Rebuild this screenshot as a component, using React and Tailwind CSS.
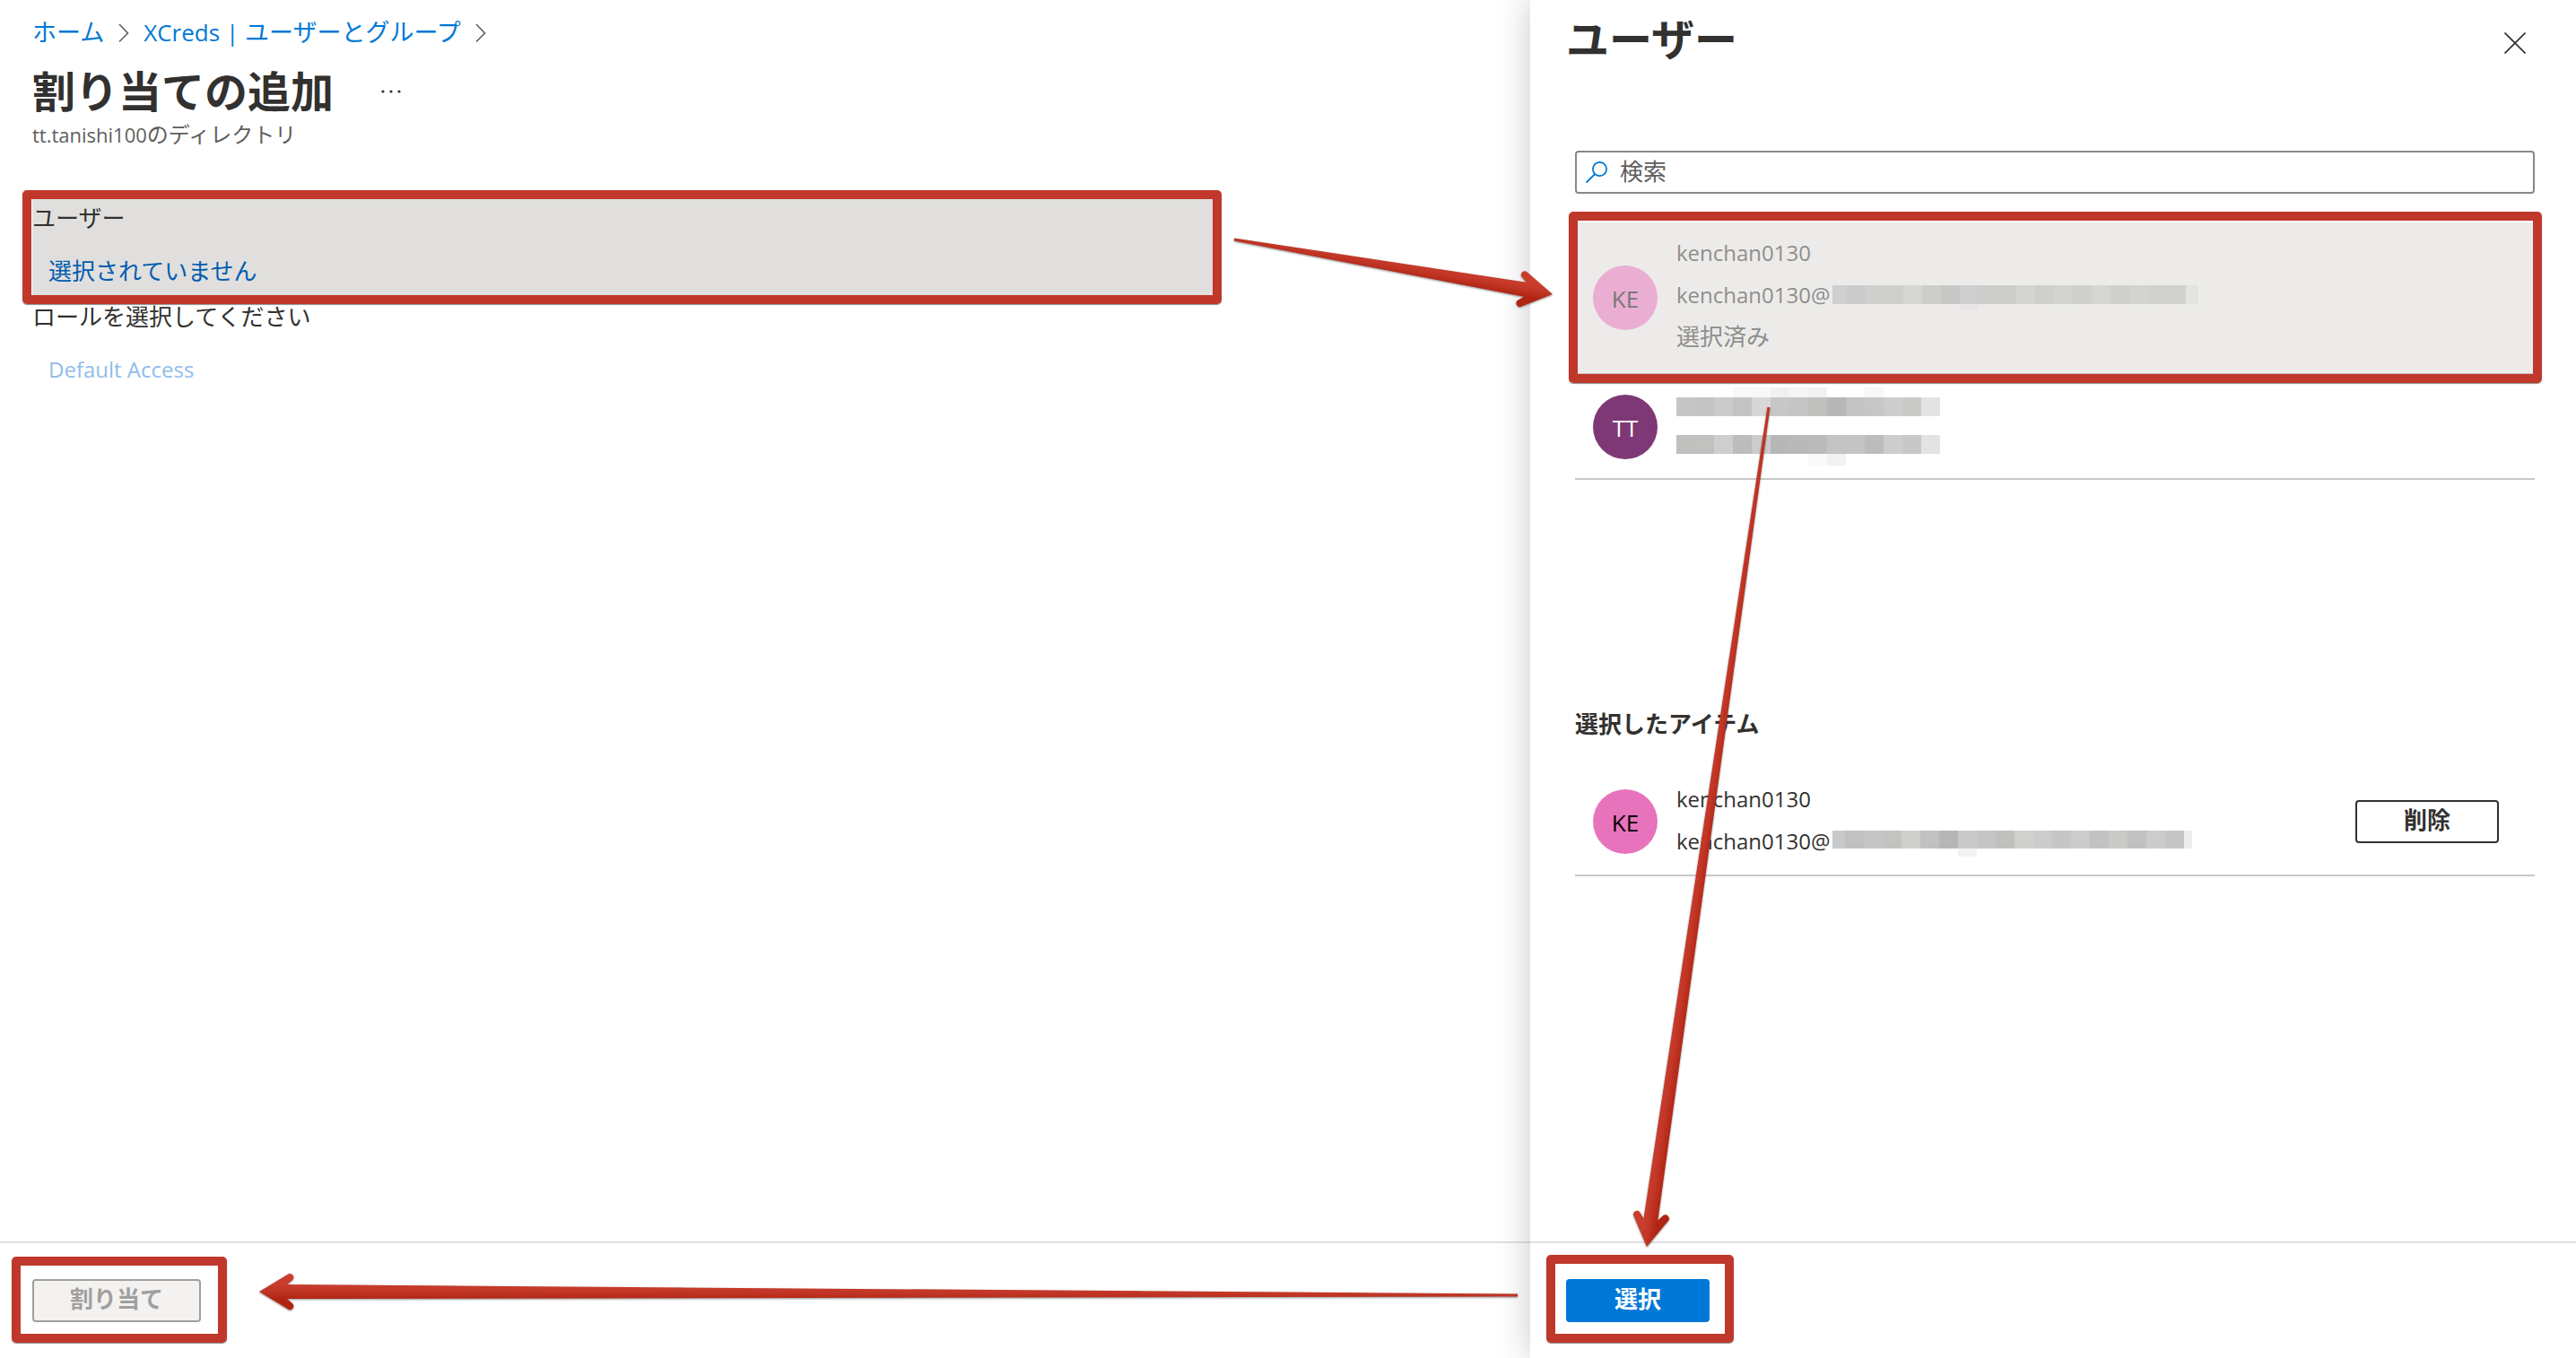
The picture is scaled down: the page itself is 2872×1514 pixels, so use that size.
import React from "react";

function Highlight({ className }) {
  return (
    <span
      aria-hidden="true"
      className={`pointer-events-none absolute rounded-[5px] border-[10px] border-[#bf382b] shadow-[0_1px_1px_rgba(0,0,0,0.45)] ${className}`}
    />
  );
}

function Chevron() {
  return (
    <svg className="h-6 w-3 shrink-0" viewBox="0 0 12 24" fill="none" stroke="#605e5c" strokeWidth="1.6" aria-hidden="true">
      <path d="M1 3l9.5 10L1 22.500" />
    </svg>
  );
}

function Arrow({ id, from, to }) {
  const dx = to[0] - from[0];
  const dy = to[1] - from[1];
  const l = Math.hypot(dx, dy);
  const angle = (Math.atan2(dy, dx) * 180) / Math.PI;
  const flip = angle > 90 || angle < -90;
  const d = `M0 -1.500 L${l - 31} -8 L${l - 37.500} -13.500 A4.200 4.200 0 0 1 ${l - 33} -20 L${l} 0 L${l - 33} 20 A4.200 4.200 0 0 1 ${l - 37.500} 13.500 L${l - 31} 8 L0 1.500 Z`;
  return (
    <g transform={`translate(${from[0]} ${from[1]}) rotate(${angle})`}>
      <defs>
        <linearGradient id={id} gradientUnits="userSpaceOnUse" x1="0" x2="0" y1={flip ? 8 : -8} y2={flip ? -8 : 8}>
          <stop offset="0" stopColor="#c93d2d" />
          <stop offset="0.45" stopColor="#c13626" />
          <stop offset="1" stopColor="#b12413" />
        </linearGradient>
      </defs>
      <path d={d} fill={`url(#${id})`} />
    </g>
  );
}

function Mosaic({ width, height, cells, className }) {
  return (
    <svg className={`shrink-0 ${className ?? ""}`} width={width} height={height} shapeRendering="crispEdges" aria-hidden="true">
      {cells.map(([x, y, w, h, fill]) => (
        <rect key={`${x}-${y}`} x={x} y={y} width={w} height={h} fill={fill} />
      ))}
    </svg>
  );
}

function strip(colors, y, h, first, last) {
  let x = 0;
  return colors.map((c, i) => {
    const w = i === 0 ? first : i === colors.length - 1 ? last : 21;
    const cell = [x, y, w, h, c];
    x += w;
    return cell;
  });
}

const listMail = [
  ...strip(
    ["#cfcfcf", "#cbcbcb", "#cfcfcd", "#cfcfcd", "#d6d6d4", "#cdcdcb", "#c8c8c6", "#cecece", "#cdcdcb", "#cdcdcb", "#d4d4d2", "#cfcfcd", "#d3d3d1", "#cfcfcd", "#d6d6d4", "#cfcfcd", "#d3d3d1", "#d1d1cf", "#d1d1cf", "#e3e3e2"],
    0, 21, 16, 14
  ),
  [142, 21, 21, 6, "#e8e5e5"],
];

const selectedMail = [
  ...strip(
    ["#c9c9c9", "#c1c1c1", "#c5c5c5", "#c3c3c1", "#cfcfcd", "#c1c1c1", "#b6b6b6", "#cacac8", "#c5c5c5", "#c0c0be", "#d0d0ce", "#cccccc", "#c6c6c6", "#cccccc", "#c2c2c2", "#cacac6", "#c1c1c1", "#ccccca", "#c6c6c6", "#ededed"],
    0, 20, 14, 9
  ),
  [140, 20, 21, 9, "#f2f2f2"],
];

const secondUser = [
  [63, 0, 42, 11, "#f8f8f8"],
  [105, 0, 21, 11, "#f1f1f1"],
  [126, 0, 21, 11, "#f5f5f5"],
  [147, 0, 21, 11, "#f2f2f2"],
  [210, 0, 21, 11, "#f7f7f7"],
  ...strip(["#c6c6c6", "#c4c4c4", "#cbcbcb", "#c3c3c3", "#d7d7d7", "#c7c7c7", "#c5c5c5", "#c0c0be", "#b7b7b7", "#c3c3c3", "#c7c7c7", "#cdcdcd", "#c9c9c6", "#e3e3e3"], 11, 21, 21, 21),
  ...strip(["#c0c0be", "#c1c1bf", "#cecece", "#bcbcbc", "#cccccc", "#b7b7b7", "#b9b9b9", "#bbbbbb", "#c4c4c4", "#c4c4c4", "#bcbcbc", "#cdcdcd", "#c8c8c8", "#e3e3e3"], 53, 21, 21, 21),
  [147, 74, 21, 13, "#fafafa"],
  [168, 74, 21, 13, "#f2f2f2"],
];

function Avatar({ className, children }) {
  return (
    <span className={`flex h-[72px] w-[72px] shrink-0 items-center justify-center rounded-full pt-0.5 text-[26px] ${className}`}>
      {children}
    </span>
  );
}

export default function App() {
  return (
    <div className="relative flex min-h-screen overflow-hidden bg-white font-['Open_Sans','Noto_Sans_CJK_JP',sans-serif] text-[26px] leading-9 text-[#323130]">
      <main className="flex min-w-0 flex-1 flex-col">
        <div className="flex-1 px-9 pt-[18px]">
          <nav aria-label="階層リンク" className="flex h-9 items-center gap-4 text-[27px] text-[#0078d4]">
            <a href="#home">ホーム</a>
            <Chevron />
            <a href="#users">
              <span className="text-[26px]">XCreds | </span>ユーザーとグループ
            </a>
            <Chevron />
          </nav>
          <div className="mt-5 flex items-center gap-11">
            <h1 className="text-5xl leading-14 font-bold">割り当ての追加</h1>
            <button type="button" aria-label="その他" className="flex h-10 w-10 items-center justify-center">
              <svg className="h-1 w-6" viewBox="0 0 24 4" fill="#323130" aria-hidden="true">
                <circle cx="3" cy="2" r="1.600" />
                <circle cx="12" cy="2" r="1.600" />
                <circle cx="21" cy="2" r="1.600" />
              </svg>
            </button>
          </div>
          <p className="mt-0.5 text-2xl leading-9 text-[#605e5c]">
            <span className="text-[22px]">tt.tanishi100</span>のディレクトリ
          </p>

          <section className="relative mt-[54px] h-[110px] w-[1316px] max-w-full bg-[#e0dfdd] pt-[3px]">
            <h2>ユーザー</h2>
            <a href="#select-users" className="ml-[18px] mt-[23px] inline-block text-[#015cb0]">
              選択されていません
            </a>
            <Highlight className="-top-2.5 -right-2.5 -bottom-[7px] -left-[11px]" />
          </section>
          <section className="h-[110px] pt-[3px]">
            <h2>ロールを選択してください</h2>
            <a href="#select-role" className="ml-[18px] mt-[23px] inline-block text-2xl leading-9 text-[#8fbdea]">
              Default Access
            </a>
          </section>
        </div>
        <footer className="h-[130px] border-t-2 border-[#e0e0e0] px-9 pt-10">
          <div className="relative w-[188px]">
            <button type="button" disabled className="h-12 w-full rounded-sm border-2 border-[#a19f9d] bg-[#f3f2f1] pb-1 font-bold text-[#a19f9d]">
              割り当て
            </button>
            <Highlight className="-top-[25px] -right-[29px] -bottom-[23px] -left-[23px]" />
          </div>
        </footer>
      </main>

      <aside className="flex w-[1166px] shrink-0 flex-col bg-white shadow-[0_0_36px_rgba(0,0,0,0.22)]">
        <div className="flex-1 pr-[46px] pl-[50px]">
          <header className="-ml-2.5 flex h-24 items-start justify-between pt-4">
            <h2 className="text-5xl leading-14 font-bold">ユーザー</h2>
            <button type="button" aria-label="閉じる" className="flex h-16 w-11 items-center justify-center">
              <svg className="h-6 w-6" viewBox="0 0 24 24" fill="none" stroke="#323130" strokeWidth="1.600" aria-hidden="true">
                <path d="M0.500 0.500l23 23M23.500 0.500l-23 23" />
              </svg>
            </button>
          </header>

          <label className="mt-18 flex h-12 items-center gap-3.5 rounded-sm border-2 border-[#8a8886] px-2.5">
            <svg className="h-6 w-6 shrink-0" viewBox="0 0 24 24" fill="none" stroke="#0078d4" strokeWidth="1.800" aria-hidden="true">
              <circle cx="15.500" cy="8.500" r="7.600" />
              <path d="M10.200 14L0.600 23.500" />
            </svg>
            <input
              type="text"
              aria-label="検索"
              placeholder="検索"
              className="h-10 min-w-0 flex-1 bg-transparent pb-0.5 outline-none placeholder:text-[#605e5c]"
            />
          </label>

          <ul className="mt-8">
            <li className="relative flex h-[170px] items-center gap-[21px] border-b-2 border-[#c8c8c8] bg-[#ecebe9] pl-5 text-[#8f8e8c]">
              <Avatar className="bg-[#ebaed3] text-[#797775]">KE</Avatar>
              <div className="pb-2 leading-[47px]">
                <div className="text-2xl leading-[47px]">kenchan0130</div>
                <div className="flex items-center text-2xl leading-[47px]">
                  kenchan0130@
                  <Mosaic width={408} height={27} cells={listMail} className="mt-1.5 ml-[3px]" />
                </div>
                <div>選択済み</div>
              </div>
              <Highlight className="-top-3 -right-2 -bottom-[11px] -left-[7px]" />
            </li>
            <li className="flex h-[117px] items-center gap-[21px] border-b-2 border-[#c8c8c8] pl-5">
              <Avatar className="bg-[#7f3876] text-white">TT</Avatar>
              <Mosaic width={294} height={87} cells={secondUser} />
            </li>
          </ul>

          <h3 className="mt-[254px] font-bold">選択したアイテム</h3>
          <ul className="mt-8">
            <li className="flex h-[120px] items-center gap-[21px] border-b-2 border-[#c8c8c8] pr-10 pl-5">
              <Avatar className="bg-[#e873bd] text-black">KE</Avatar>
              <div className="flex-1 pb-1 text-2xl leading-[47px]">
                <div>kenchan0130</div>
                <div className="flex items-center">
                  kenchan0130@
                  <Mosaic width={401} height={29} cells={selectedMail} className="mt-1.5 ml-[3px]" />
                </div>
              </div>
              <button type="button" className="h-12 w-40 rounded-sm border-2 border-[#323130] pb-1 font-bold">
                削除
              </button>
            </li>
          </ul>
        </div>
        <footer className="h-[130px] border-t-2 border-[#e0e0e0] pt-10 pl-10">
          <div className="relative w-40">
            <button type="button" className="h-12 w-full rounded-sm bg-[#0078d7] pb-1 font-bold text-white">
              選択
            </button>
            <Highlight className="-top-[27px] -right-[27px] -bottom-[23px] -left-[22px]" />
          </div>
        </footer>
      </aside>

      <svg className="pointer-events-none absolute inset-0 h-full w-full drop-shadow-[0_1px_1px_rgba(0,0,0,0.45)]" aria-hidden="true">
        <Arrow id="to-list" from={[1376, 267]} to={[1731, 328]} />
        <Arrow id="to-select" from={[1972, 454]} to={[1836, 1390]} />
        <Arrow id="to-assign" from={[1692, 1444]} to={[289, 1440]} />
      </svg>
    </div>
  );
}
